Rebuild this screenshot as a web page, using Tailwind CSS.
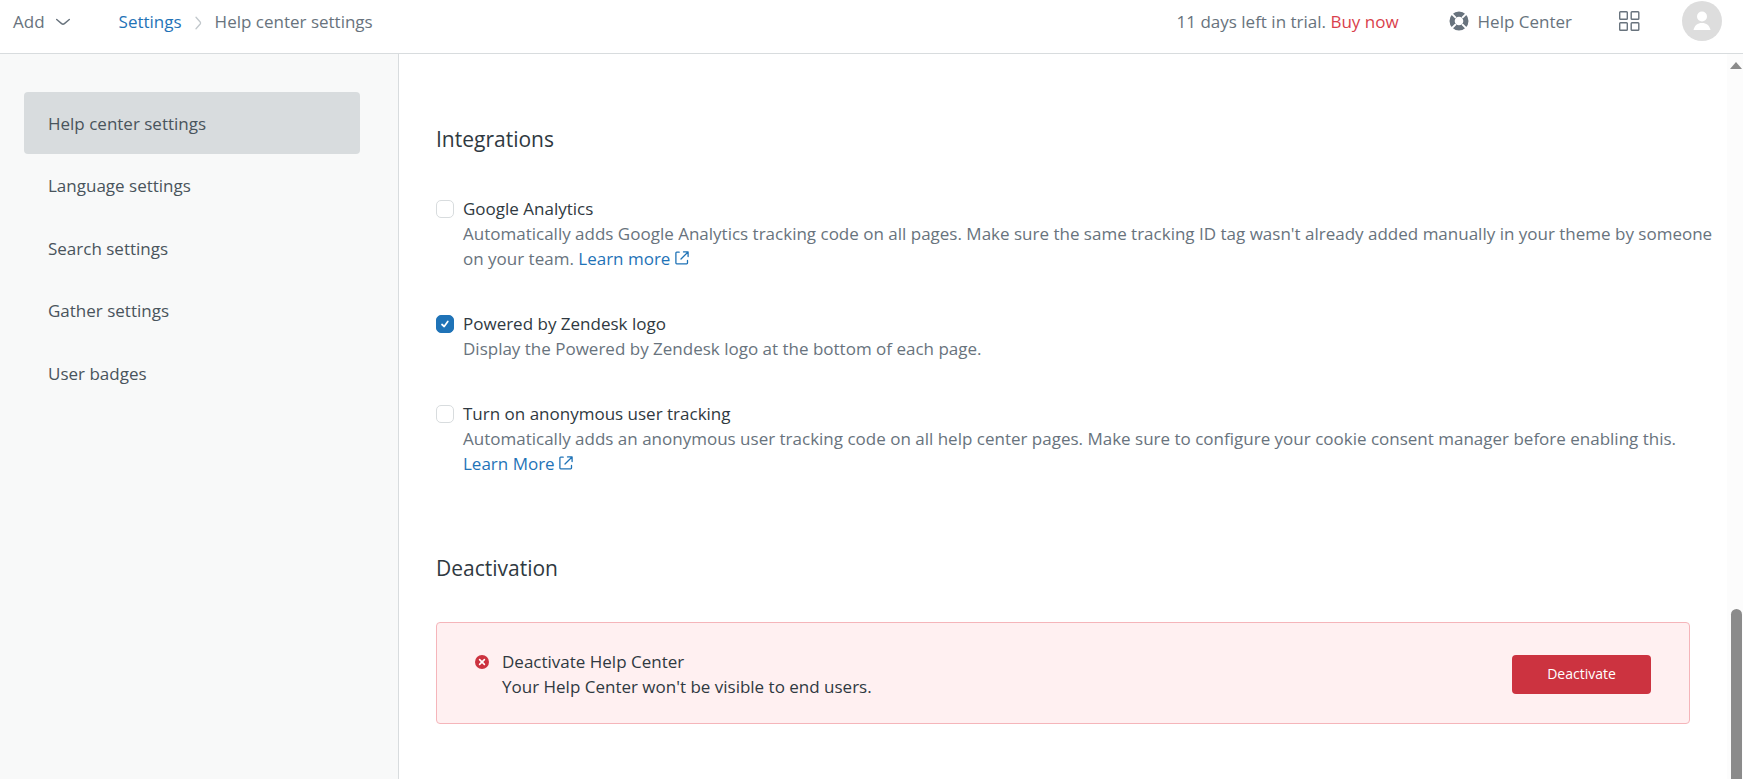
<!DOCTYPE html>
<html lang="en">
<head>
<meta charset="utf-8">
<meta name="viewport" content="width=device-width, initial-scale=1">
<title>Help center settings</title>
<script src="https://cdn.jsdelivr.net/npm/@tailwindcss/browser@4"></script>
</head>
<body class="flex h-screen flex-col overflow-hidden bg-white font-['Open_Sans','Noto_Sans',sans-serif] text-[17px] leading-[25px] text-[#2f3941]">
  <header class="flex h-[54px] shrink-0 items-start border-b border-[#d8dcde] pr-[21px] pl-[13px] text-[#68737d]">
    <button type="button" class="mt-[9px] flex items-center gap-[11px]">
      Add
      <svg class="h-3.5 w-3.5" viewBox="0 0 14 14" fill="none" stroke="currentColor" stroke-width="1.4" stroke-linecap="round" stroke-linejoin="round" aria-hidden="true"><path d="M.7 4.5 5.6 8.6Q7 9.8 8.4 8.6L13.3 4.5"/></svg>
    </button>
    <nav aria-label="Breadcrumb" class="mt-[9px] ml-[49px] flex items-center">
      <a href="#" class="text-[#1f73b7]">Settings</a>
      <svg class="mx-[13px] mt-0.5 h-3.5 w-[7px]" viewBox="0 0 7 14" fill="none" stroke="#c2c8cc" stroke-width="1.3" stroke-linecap="round" stroke-linejoin="round" aria-hidden="true"><path d="M1 1.2 5.2 6Q6 7 5.2 8L1 12.8"/></svg>
      <span aria-current="page">Help center settings</span>
    </nav>
    <p class="mt-[9px] ml-auto">11 days left in trial. <a href="#" class="text-[#d93f4c]">Buy now</a></p>
    <a href="#" class="mt-[9px] ml-[50px] flex items-center gap-[9px]">
      <svg class="mb-0.5 h-5 w-5" viewBox="0 0 20 20" fill="none" aria-hidden="true">
        <circle cx="10" cy="10" r="6.9" stroke="#68737d" stroke-width="5.2"/>
        <path d="M2.6 2.6 6.9 6.9M17.4 2.6 13.1 6.9M2.6 17.4 6.9 13.1M17.4 17.4 13.1 13.1" stroke="#fff" stroke-width="2"/>
      </svg>
      Help Center
    </a>
    <button type="button" aria-label="Products" class="mt-[11px] ml-[46px]">
      <svg class="h-5 w-[22px]" viewBox="0 0 22 20" fill="none" stroke="#68737d" stroke-width="1.4" aria-hidden="true"><rect x="1.7" y=".7" width="7.6" height="7.6" rx=".8"/><rect x="13.2" y=".7" width="7.6" height="7.6" rx=".8"/><rect x="1.7" y="11.7" width="7.6" height="7.6" rx=".8"/><rect x="13.2" y="11.7" width="7.6" height="7.6" rx=".8"/></svg>
    </button>
    <button type="button" aria-label="Profile" class="mt-px ml-[42px]">
      <svg class="h-10 w-10" viewBox="0 0 40 40" aria-hidden="true"><circle cx="20" cy="20" r="20" fill="#ddd"/><circle cx="20" cy="15.5" r="5" fill="#fff"/><path d="M11.5 29C12.5 24.5 15.5 22 20 22s7.500 2.500 8.500 7z" fill="#fff"/></svg>
    </button>
  </header>

  <div class="flex min-h-0 flex-1">
    <nav aria-label="Settings" class="w-[399px] shrink-0 border-r border-[#d8dcde] bg-[#f8f9f9] pt-[38px] pr-[38px] pl-6 text-[#49545c]">
      <ul>
        <li><a href="#" aria-current="page" class="flex h-[62px] items-center rounded bg-[#d8dcde] px-6">Help center settings</a></li>
        <li><a href="#" class="flex h-[63px] items-center rounded px-6">Language settings</a></li>
        <li><a href="#" class="flex h-[62px] items-center rounded px-6">Search settings</a></li>
        <li><a href="#" class="flex h-[63px] items-center rounded px-6">Gather settings</a></li>
        <li><a href="#" class="flex h-[62px] items-center rounded px-6">User badges</a></li>
      </ul>
    </nav>

    <main class="min-w-0 flex-1 overflow-hidden pt-[70px] pr-[37px] pl-[37px]">
      <section>
        <h2 class="text-[21px] leading-[30px]">Integrations</h2>
        <div class="mt-[42px] flex flex-col gap-10">
          <div class="-mr-8 flex items-start gap-[9px]">
            <input id="ga" type="checkbox" class="mt-1 h-[18px] w-[18px] shrink-0 appearance-none rounded-[5px] border border-[#d8dcde] bg-white">
            <div>
              <label for="ga">Google Analytics</label>
              <p class="text-[#68737d]">Automatically adds Google Analytics tracking code on all pages. Make sure the same tracking ID tag wasn't already added manually in your theme by someone on your team. <a href="#" class="whitespace-nowrap text-[#1f73b7]">Learn more <svg class="mb-1 inline h-3.5 w-3.5" viewBox="0 0 14 14" fill="none" stroke="currentColor" stroke-width="1.3" stroke-linecap="round" stroke-linejoin="round" aria-hidden="true"><path d="M4.2 1.2H1.700a.8.8 0 0 0-.8.8v10a.8.8 0 0 0 .8.8h10a.8.8 0 0 0 .8-.8V9.500M6 8 12.800 1.200M8.500.9h4.600v4.600"/></svg></a></p>
            </div>
          </div>
          <div class="flex items-start gap-[9px]">
            <span class="relative mt-1 flex h-[18px] w-[18px] shrink-0">
              <input id="logo" type="checkbox" checked class="h-[18px] w-[18px] appearance-none rounded-[5px] border border-[#1f73b7] checked:bg-[#1f73b7]">
              <svg class="pointer-events-none absolute inset-0 h-[18px] w-[18px]" viewBox="0 0 18 18" fill="none" stroke="#fff" stroke-width="1.7" stroke-linecap="round" stroke-linejoin="round" aria-hidden="true"><path d="M6 9.500 8.200 11.500 11.800 6.500"/></svg>
            </span>
            <div>
              <label for="logo">Powered by Zendesk logo</label>
              <p class="text-[#68737d]">Display the Powered by Zendesk logo at the bottom of each page.</p>
            </div>
          </div>
          <div class="flex items-start gap-[9px]">
            <input id="anon" type="checkbox" class="mt-1 h-[18px] w-[18px] shrink-0 appearance-none rounded-[5px] border border-[#d8dcde] bg-white">
            <div>
              <label for="anon">Turn on anonymous user tracking</label>
              <p class="text-[#68737d]">Automatically adds an anonymous user tracking code on all help center pages. Make sure to configure your cookie consent manager before enabling this. <a href="#" class="whitespace-nowrap text-[#1f73b7]">Learn More <svg class="mb-1 inline h-3.5 w-3.5" viewBox="0 0 14 14" fill="none" stroke="currentColor" stroke-width="1.3" stroke-linecap="round" stroke-linejoin="round" aria-hidden="true"><path d="M4.2 1.2H1.700a.8.8 0 0 0-.8.8v10a.8.8 0 0 0 .8.8h10a.8.8 0 0 0 .8-.8V9.500M6 8 12.800 1.200M8.500.9h4.600v4.600"/></svg></a></p>
            </div>
          </div>
        </div>
      </section>

      <section class="mt-[77px]">
        <h2 class="text-[21px] leading-[30px]">Deactivation</h2>
        <div role="alert" class="mt-[39px] flex items-center rounded border border-[#f5b5ba] bg-[#fff0f1] px-[38px] pt-[26px] pb-6">
          <svg class="mt-1.5 h-3.5 w-3.5 shrink-0 self-start" viewBox="0 0 14 14" aria-hidden="true"><circle cx="7" cy="7" r="7" fill="#cc3340"/><path d="M4.600 4.600l4.800 4.800M9.400 4.600 4.600 9.400" stroke="#fff" stroke-width="1.6" stroke-linecap="round"/></svg>
          <div class="ml-[13px]">
            <h3>Deactivate Help Center</h3>
            <p>Your Help Center won't be visible to end users.</p>
          </div>
          <button type="button" class="ml-auto h-[39px] w-[139px] rounded bg-[#cc3340] text-sm text-white">Deactivate</button>
        </div>
      </section>
    </main>

    <div aria-hidden="true" class="flex w-4 shrink-0 flex-col items-end justify-between bg-[#fcfcfc] pt-2 pr-px">
      <svg class="h-[7px] w-3" viewBox="0 0 12 7"><path d="M6 0l6 7H0z" fill="#8b8b8b"/></svg>
      <div class="h-[170px] w-[11px] rounded-t-full bg-[#8b8b8b]"></div>
    </div>
  </div>
</body>
</html>
